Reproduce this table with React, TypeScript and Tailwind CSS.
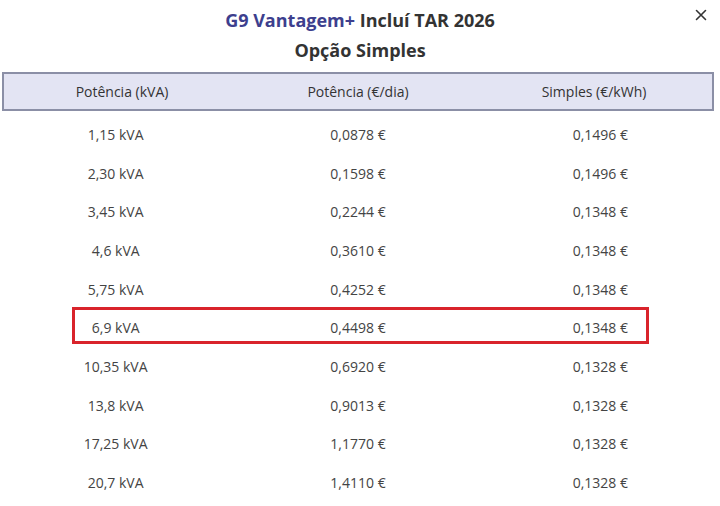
import React from "react";

const rows: [string, string, string][] = [
  ["1,15 kVA", "0,0878 €", "0,1496 €"],
  ["2,30 kVA", "0,1598 €", "0,1496 €"],
  ["3,45 kVA", "0,2244 €", "0,1348 €"],
  ["4,6 kVA", "0,3610 €", "0,1348 €"],
  ["5,75 kVA", "0,4252 €", "0,1348 €"],
  ["6,9 kVA", "0,4498 €", "0,1348 €"],
  ["10,35 kVA", "0,6920 €", "0,1328 €"],
  ["13,8 kVA", "0,9013 €", "0,1328 €"],
  ["17,25 kVA", "1,1770 €", "0,1328 €"],
  ["20,7 kVA", "1,4110 €", "0,1328 €"],
];

export default function App() {
  return (
    <div
      className="w-[720px] h-[506px] bg-white overflow-hidden relative text-[#333]"
      style={{ fontFamily: '"Open Sans", "Noto Sans", sans-serif' }}
    >
      <button className="absolute right-[12px] top-[8px] w-[14px] h-[14px] flex items-center justify-center">
        <svg width="12" height="12" viewBox="0 0 12 12">
          <path d="M1.5 1.5 L10.5 10.5 M10.5 1.5 L1.5 10.5" stroke="#333" strokeWidth="1.6" strokeLinecap="round" />
        </svg>
      </button>
      <div className="flex flex-col items-center pt-[6px] h-[72px]">
        <div className="text-[18px] font-bold leading-[28px]">
          <span className="text-[#3d3f8e]">G9 Vantagem+</span> Incluí TAR 2026
        </div>
        <div className="text-[18px] font-bold leading-[28px] mt-[2px]">Opção Simples</div>
      </div>
      <div className="mx-[2px] w-[712px]">
        <div className="grid grid-cols-3 h-[39px] items-center bg-[#e3e4f3] border-2 border-[#8b8fa6] text-[14px] text-[#333]">
          <div className="text-center">Potência (kVA)</div>
          <div className="text-center">Potência (€/dia)</div>
          <div className="text-center">Simples (€/kWh)</div>
        </div>
        <div className="pt-[4px]">
          {rows.map((r, i) => (
            <div key={i} className="relative grid grid-cols-3 h-[38.7px] items-center text-[14px] text-[#444]">
              <div className="text-center pr-[10px]">{r[0]}</div>
              <div className="text-center">{r[1]}</div>
              <div className="text-center pl-[10px]">{r[2]}</div>
              {i === 5 && (
                <div className="absolute left-[70px] top-[-1px] w-[577px] h-[37px] border-[3px] border-[#d9232b] pointer-events-none" />
              )}
            </div>
          ))}
        </div>
      </div>
    </div>
  );
}
